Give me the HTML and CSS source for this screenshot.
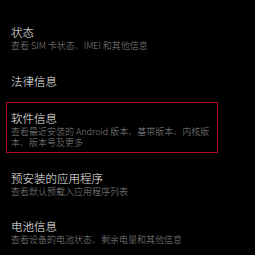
FILE: index.html
```html
<!DOCTYPE html>
<html lang="zh-CN">
<head>
    <meta charset="UTF-8">
    <meta name="viewport" content="width=device-width, initial-scale=1.0">
    <title>关于</title>
    <link rel="stylesheet" href="styles.css">
</head>
<body>
    <div class="list">
        <div class="item">
            <div class="title">状态</div>
            <div class="desc">查看 SIM 卡状态、IMEI 和其他信息</div>
        </div>
        <div class="item">
            <div class="title">法律信息</div>
        </div>
        <div class="item selected">
            <div class="title">软件信息</div>
            <div class="desc">查看最近安装的 Android 版本、基带版本、内核版本、版本号及更多</div>
        </div>
        <div class="item">
            <div class="title">预安装的应用程序</div>
            <div class="desc">查看默认预载入应用程序列表</div>
        </div>
        <div class="item">
            <div class="title">电池信息</div>
            <div class="desc">查看设备的电池状态、剩余电量和其他信息</div>
        </div>
    </div>
</body>
</html>
```

FILE: styles.css
```css
body {
    margin: 0;
    background-color: #000;
    font-family: "Noto Sans CJK SC", "Noto Sans", sans-serif;
    font-weight: 300;
    width: 255px;
    height: 255px;
    overflow: hidden;
}

.list {
    display: flex;
    flex-direction: column;
    gap: 9px;
    padding: 16px 0 0 6px;
}

.item {
    width: 202px;
    padding: 7px 4px 3px 4px;
    border: 1px solid transparent;
}

.selected {
    border-color: #b0101c;
}

.title {
    color: #f2f2f2;
    font-size: 11.5px;
    line-height: 16px;
}

.desc {
    color: #888;
    font-size: 9px;
    line-height: 11.5px;
}
```
